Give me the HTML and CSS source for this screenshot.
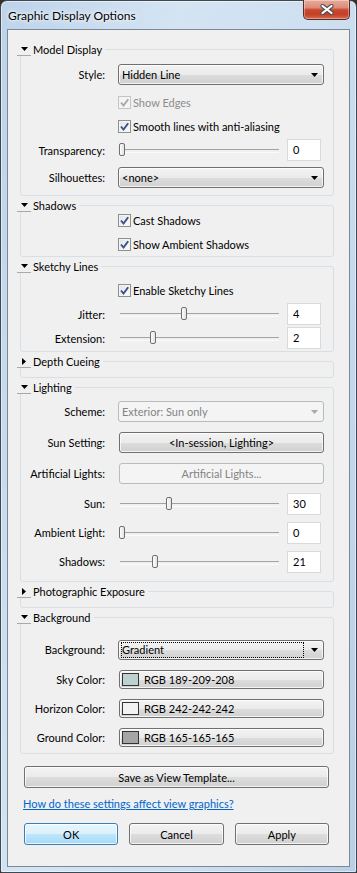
FILE: index.html
```html
<!DOCTYPE html>
<html lang="en">
<head>
  <meta charset="UTF-8" />
  <title>Graphic Display Options</title>
  <link rel="stylesheet" href="styles.css">
</head>
<body>
  <div class="window">
    <div class="titlebar">
      <span class="title">Graphic Display Options</span>
      <button class="close" aria-label="Close">
        <svg width="14" height="11" viewBox="0 0 14 11"><path d="M2.5 2 L11.5 9 M11.5 2 L2.5 9" stroke="#505050" stroke-width="4.2" stroke-linecap="round"/><path d="M2.5 2 L11.5 9 M11.5 2 L2.5 9" stroke="#fff" stroke-width="2.2" stroke-linecap="round"/></svg>
      </button>
    </div>

    <div class="client">
      <div class="panel">

        <div class="section">
          <div class="sec-head"><span class="toggle"><svg width="7" height="4"><path d="M0 0H7L3.5 4Z"/></svg></span><span class="sec-title">Model Display</span></div>
          <div class="group g-model">
            <div class="row tall">
              <span class="label">Style:</span>
              <div class="field combo"><span class="combo-text">Hidden Line</span><svg class="arrow" width="7" height="4"><path d="M0 0H7L3.5 4Z"/></svg></div>
            </div>
            <div class="row">
              <span class="label"></span>
              <label class="field check disabled"><span class="box"><svg width="11" height="11"><path d="M2 5.5L4.5 8.5L9.2 2.2" fill="none" stroke="#a4a9b0" stroke-width="1.9"/></svg></span>Show Edges</label>
            </div>
            <div class="row">
              <span class="label"></span>
              <label class="field check"><span class="box"><svg width="11" height="11"><path d="M2 5.5L4.5 8.5L9.2 2.2" fill="none" stroke="#3a4f88" stroke-width="1.9"/></svg></span>Smooth lines with anti-aliasing</label>
            </div>
            <div class="row">
              <span class="label">Transparency:</span>
              <div class="field slider"><div class="track"><span class="thumb" style="--v:0"></span></div><span class="num">0</span></div>
            </div>
            <div class="row tall">
              <span class="label">Silhouettes:</span>
              <div class="field combo"><span class="combo-text">&lt;none&gt;</span><svg class="arrow" width="7" height="4"><path d="M0 0H7L3.5 4Z"/></svg></div>
            </div>
          </div>
        </div>

        <div class="section">
          <div class="sec-head"><span class="toggle"><svg width="7" height="4"><path d="M0 0H7L3.5 4Z"/></svg></span><span class="sec-title">Shadows</span></div>
          <div class="group g-shadows">
            <div class="row">
              <span class="label"></span>
              <label class="field check"><span class="box"><svg width="11" height="11"><path d="M2 5.5L4.5 8.5L9.2 2.2" fill="none" stroke="#3a4f88" stroke-width="1.9"/></svg></span>Cast Shadows</label>
            </div>
            <div class="row">
              <span class="label"></span>
              <label class="field check"><span class="box"><svg width="11" height="11"><path d="M2 5.5L4.5 8.5L9.2 2.2" fill="none" stroke="#3a4f88" stroke-width="1.9"/></svg></span>Show Ambient Shadows</label>
            </div>
          </div>
        </div>

        <div class="section">
          <div class="sec-head"><span class="toggle"><svg width="7" height="4"><path d="M0 0H7L3.5 4Z"/></svg></span><span class="sec-title">Sketchy Lines</span></div>
          <div class="group g-sketchy">
            <div class="row">
              <span class="label"></span>
              <label class="field check"><span class="box"><svg width="11" height="11"><path d="M2 5.5L4.5 8.5L9.2 2.2" fill="none" stroke="#3a4f88" stroke-width="1.9"/></svg></span>Enable Sketchy Lines</label>
            </div>
            <div class="row">
              <span class="label">Jitter:</span>
              <div class="field slider"><div class="track"><span class="thumb" style="--v:40"></span></div><span class="num">4</span></div>
            </div>
            <div class="row">
              <span class="label">Extension:</span>
              <div class="field slider"><div class="track"><span class="thumb" style="--v:20"></span></div><span class="num">2</span></div>
            </div>
          </div>
        </div>

        <div class="section">
          <div class="sec-head"><span class="toggle"><svg width="4" height="7"><path d="M0 0V7L4 3.5Z"/></svg></span><span class="sec-title">Depth Cueing</span></div>
          <div class="group collapsed"></div>
        </div>

        <div class="section">
          <div class="sec-head"><span class="toggle"><svg width="7" height="4"><path d="M0 0H7L3.5 4Z"/></svg></span><span class="sec-title">Lighting</span></div>
          <div class="group g-lighting">
            <div class="row tall">
              <span class="label">Scheme:</span>
              <div class="field combo disabled"><span class="combo-text">Exterior: Sun only</span><svg class="arrow" width="7" height="4"><path d="M0 0H7L3.5 4Z"/></svg></div>
            </div>
            <div class="row tall">
              <span class="label">Sun Setting:</span>
              <button class="field btn">&lt;In-session, Lighting&gt;</button>
            </div>
            <div class="row tall">
              <span class="label">Artificial Lights:</span>
              <button class="field btn disabled">Artificial Lights...</button>
            </div>
            <div class="row mid">
              <span class="label">Sun:</span>
              <div class="field slider"><div class="track"><span class="thumb" style="--v:30"></span></div><span class="num">30</span></div>
            </div>
            <div class="row mid">
              <span class="label">Ambient Light:</span>
              <div class="field slider"><div class="track"><span class="thumb" style="--v:0"></span></div><span class="num">0</span></div>
            </div>
            <div class="row mid">
              <span class="label">Shadows:</span>
              <div class="field slider"><div class="track"><span class="thumb" style="--v:21"></span></div><span class="num">21</span></div>
            </div>
          </div>
        </div>

        <div class="section">
          <div class="sec-head"><span class="toggle"><svg width="4" height="7"><path d="M0 0V7L4 3.5Z"/></svg></span><span class="sec-title">Photographic Exposure</span></div>
          <div class="group collapsed"></div>
        </div>

        <div class="section">
          <div class="sec-head"><span class="toggle"><svg width="7" height="4"><path d="M0 0H7L3.5 4Z"/></svg></span><span class="sec-title">Background</span></div>
          <div class="group g-background">
            <div class="row tall">
              <span class="label">Background:</span>
              <div class="field combo short"><span class="combo-text focus">Gradient</span><svg class="arrow" width="7" height="4"><path d="M0 0H7L3.5 4Z"/></svg></div>
            </div>
            <div class="row mid">
              <span class="label">Sky Color:</span>
              <button class="field btn color"><span class="swatch" style="background:rgb(189,209,208)"></span>RGB 189-209-208</button>
            </div>
            <div class="row mid">
              <span class="label">Horizon Color:</span>
              <button class="field btn color"><span class="swatch" style="background:rgb(242,242,242)"></span>RGB 242-242-242</button>
            </div>
            <div class="row mid">
              <span class="label">Ground Color:</span>
              <button class="field btn color"><span class="swatch" style="background:rgb(165,165,165)"></span>RGB 165-165-165</button>
            </div>
          </div>
        </div>

      </div>

      <div class="footer">
        <button class="btn wide">Save as View Template...</button>
        <a class="help" href="#">How do these settings affect view graphics?</a>
        <div class="actions">
          <button class="btn default">OK</button>
          <button class="btn">Cancel</button>
          <button class="btn">Apply</button>
        </div>
      </div>
    </div>
  </div>
</body>
</html>
```

FILE: styles.css
```css
* {
  margin: 0;
  padding: 0;
  box-sizing: border-box;
}

html, body {
  height: 100%;
}

body {
  background: #3a2e24;
  font-family: "Lato", "Liberation Sans", sans-serif;
  font-size: 11px;
  color: #000;
}

.window {
  width: 357px;
  height: 873px;
  display: flex;
  flex-direction: column;
  padding: 0 6px 5px 6px;
  border: 1px solid #3e4853;
  border-radius: 7px 7px 2px 2px;
  background: linear-gradient(100deg, #bdd3ea 0%, #d4e4f3 35%, #cedff1 65%, #b9cfe8 100%);
  box-shadow: inset 0 0 0 1px rgba(255, 255, 255, 0.5);
}

/* title bar */

.titlebar {
  height: 28px;
  display: flex;
  align-items: flex-start;
  padding-left: 1px;
}

.title {
  margin-top: 7px;
  font-size: 12px;
  line-height: 15px;
  text-shadow: 0 0 6px #fff, 0 0 3px #fff;
}

.close {
  margin-left: auto;
  margin-top: -1px;
  width: 47px;
  height: 20px;
  display: flex;
  align-items: center;
  justify-content: center;
  border: 1px solid #5c2a22;
  border-top: none;
  border-radius: 0 0 5px 5px;
  background: linear-gradient(#e9ab9b 0%, #dc8c78 40%, #c9482f 52%, #c33f26 75%, #d56a50 100%);
  box-shadow: inset 0 0 0 1px rgba(255, 255, 255, 0.35);
}

/* client area */

.client {
  flex: 1;
  display: flex;
  flex-direction: column;
  background: #f0f0f0;
  border: 1px solid #7d8896;
}

.panel {
  padding: 13px 15px 0 9px;
}

.section + .section {
  margin-top: 3px;
}

.sec-head {
  position: relative;
  z-index: 1;
  display: flex;
  align-items: center;
  width: fit-content;
  height: 13px;
  padding-right: 3px;
  background: #f0f0f0;
}

.toggle {
  width: 14px;
  height: 13px;
  display: flex;
  align-items: center;
  justify-content: center;
  border-bottom: 1px solid #a9a9a9;
}

.toggle svg {
  display: block;
  fill: #000;
}

.sec-title {
  margin-left: 2px;
  line-height: 13px;
}

.group {
  margin-top: -7px;
  margin-left: 3px;
  border: 1px solid #d5dfe5;
  border-radius: 3px;
  padding-right: 9px;
}

.g-model { padding-top: 9px; padding-bottom: 2px; }
.g-shadows { padding-top: 2px; }
.g-sketchy { padding-top: 11px; padding-bottom: 1px; }
.g-lighting { padding-top: 8px; padding-bottom: 5px; }
.g-background { padding-top: 16px; padding-bottom: 1px; }
.collapsed { height: 17px; }

/* rows */

.row {
  display: flex;
  align-items: center;
  height: 24px;
}

.row.tall { height: 31px; }
.row.mid { height: 29px; }

.label {
  flex: none;
  width: 84px;
  text-align: right;
}

.field {
  margin-left: 13px;
  width: 206px;
}

/* checkboxes */

.check {
  display: flex;
  align-items: center;
  gap: 2px;
}

.check .box {
  width: 13px;
  height: 13px;
  display: flex;
  align-items: center;
  justify-content: center;
  border: 1px solid #8e8f8f;
  background: linear-gradient(135deg, #dfe3e8, #fbfcfd);
  box-shadow: inset 0 0 0 1px #f4f4f4;
}

.check.disabled {
  color: #8d8d8d;
}

.check.disabled .box {
  border-color: #c4c4c4;
  background: #f4f4f4;
}

/* combo boxes and buttons */

.combo,
.btn {
  height: 21px;
  display: flex;
  align-items: center;
  border: 1px solid #707070;
  border-radius: 3px;
  background: linear-gradient(#f3f3f3 0%, #ebebeb 50%, #dddddd 51%, #d0d0d0 100%);
  box-shadow: inset 0 0 0 1px rgba(255, 255, 255, 0.75);
  font: inherit;
  color: #000;
}

.combo {
  padding: 0 5px 0 3px;
}

.combo.short {
  height: 20px;
  padding-left: 2px;
}

.combo-text {
  flex: 1;
}

.combo-text.focus {
  align-self: stretch;
  display: flex;
  align-items: center;
  margin: 1px 7px 1px 0;
  border: 1px dotted #000;
}

.arrow {
  display: block;
  fill: #000;
}

.combo.disabled {
  border-color: #b8bcbf;
  background: #f4f4f4;
  box-shadow: none;
  color: #838383;
}

.combo.disabled .arrow {
  fill: #a8a8a8;
}

.btn {
  justify-content: center;
}

.btn.field {
  margin-left: 14px;
  width: 205px;
}

.btn.disabled {
  border-color: #b8bcbf;
  background: #f4f4f4;
  box-shadow: none;
  color: #838383;
}

.btn.color {
  height: 19px;
  justify-content: flex-start;
  gap: 5px;
  padding-left: 2px;
}

.swatch {
  width: 17px;
  height: 13px;
  border: 1px solid #333;
}

/* sliders */

.slider {
  display: flex;
  align-items: center;
}

.track {
  position: relative;
  width: 169px;
  height: 22px;
}

.track::before {
  content: "";
  position: absolute;
  left: 2px;
  top: 10px;
  width: 159px;
  height: 2px;
  border-top: 1px solid #a3a3a3;
  border-bottom: 1px solid #fbfbfb;
}

.thumb {
  position: absolute;
  top: 4px;
  left: calc(1px + var(--v) * 1.55px);
  width: 6px;
  height: 13px;
  border: 1px solid #707070;
  border-radius: 2px;
  background: linear-gradient(to right, #fdfdfd, #e2e2e2);
}

.num {
  width: 34px;
  height: 22px;
  padding-left: 5px;
  line-height: 20px;
  background: #fff;
  border: 1px solid #dadada;
}

/* footer */

.footer {
  padding: 12px 20px 0 16px;
}

.btn.wide {
  width: 100%;
  height: 22px;
}

.help {
  display: block;
  margin-top: 8px;
  margin-left: -1px;
  line-height: 16px;
  color: #0066cc;
}

.actions {
  display: flex;
  gap: 11px;
  margin-top: 11px;
}

.actions .btn {
  flex: 1;
  height: 22px;
}

.btn.default {
  border-color: #3c7fb1;
  background: linear-gradient(#eaf6fd 0%, #d9f0fc 50%, #bee6fd 51%, #a7d9f5 100%);
}
```
